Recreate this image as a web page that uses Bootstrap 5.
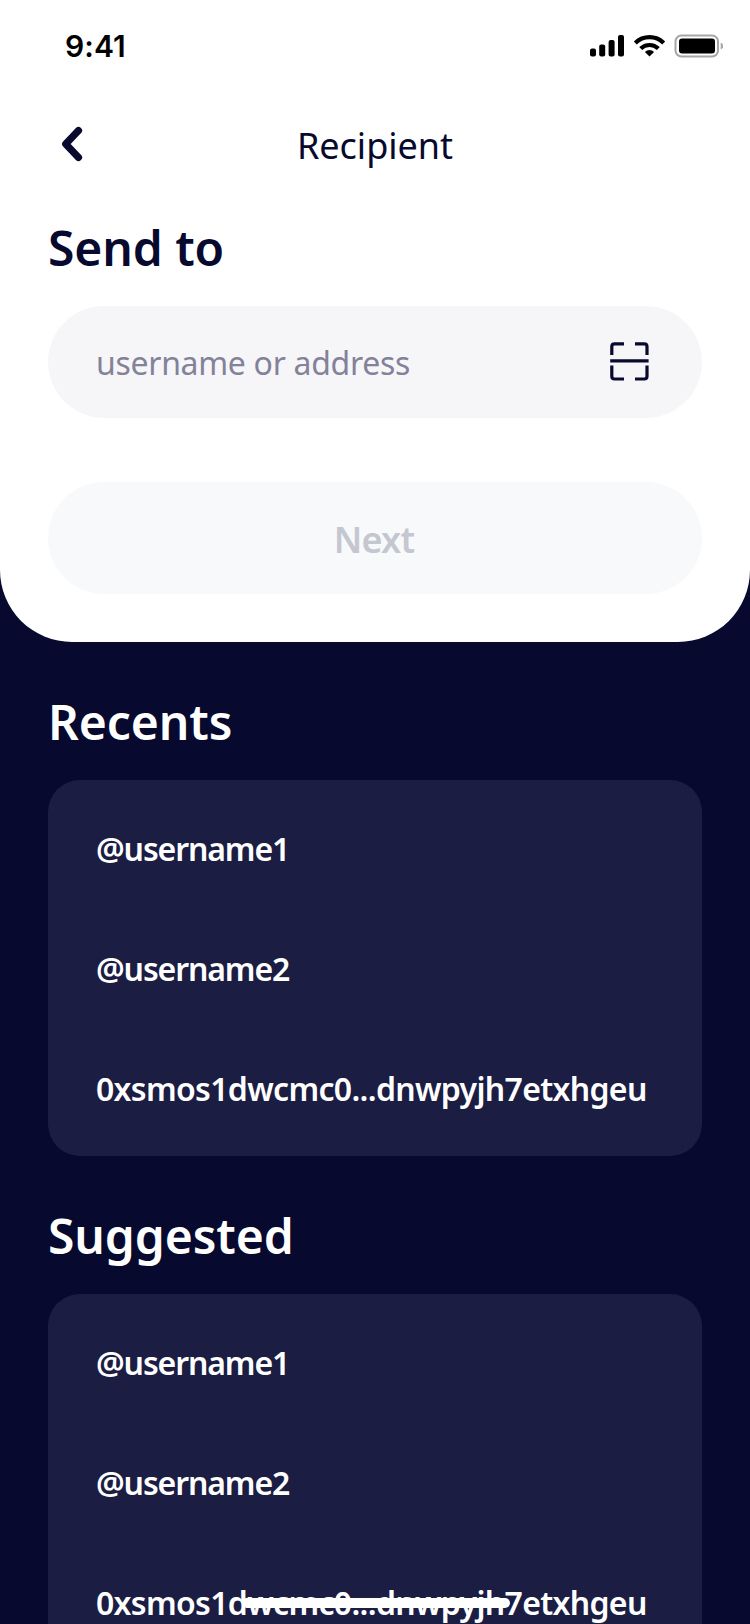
<!DOCTYPE html>
<html lang="en">
<head>
<meta charset="utf-8">
<meta name="viewport" content="width=device-width, initial-scale=1">
<title>Recipient</title>
<link rel="stylesheet" href="https://cdn.jsdelivr.net/npm/bootstrap@5.3.0/dist/css/bootstrap.min.css">
<style>
  body { background: #07092e; font-family: "Noto Sans", sans-serif; height: 1624px; overflow: hidden; }
  .sheet { height: 642px; border-radius: 0 0 72px 72px; color: #07092e; }
  .status-bar { height: 88px; color: #000; padding: 4px 27px 0 65px; }
  .clock { font: 600 30px/36px Inter, sans-serif; letter-spacing: .1px; }
  .top-bar { height: 112px; }
  .top-title { font-size: 36px; font-weight: 400; line-height: 48px; padding-top: 3px; }
  .back-btn { left: 48px; top: 32px; width: 48px; height: 48px; }
  .gutter { padding-left: 48px; padding-right: 48px; }
  .send-form { padding-top: 20px; }
  .section-title { font-size: 48px; line-height: 56px; font-weight: 600; margin: 0 0 30px; letter-spacing: -.1px; }
  .to-field { height: 112px; background: #f6f6f9; padding: 0 50px 0 48px; margin-bottom: 64px; }
  .to-input, .to-input:focus { font-size: 32px; color: #07092e; letter-spacing: -.31px; background: transparent; box-shadow: none; line-height: 44px; position: relative; }
  .to-input { margin-top: 2px; }
  .to-input::placeholder { color: #838299; opacity: 1; }
  .next-btn, .next-btn:disabled { height: 112px; background: #f8f9fb; color: #c5c7d0; font-size: 36px; font-weight: 600; letter-spacing: -.8px; opacity: 1; border: 0; padding: 3px 2px 0 0; }
  .people { background: #1c1d43; border-radius: 32px; padding: 8px 0; --bs-list-group-bg: transparent; --bs-list-group-color: #fff; }
  .person { height: 120px; padding: 1px 48px 0; font-size: 32px; font-weight: 600; letter-spacing: -1.12px; white-space: nowrap; }
  .person-addr { letter-spacing: -.68px; }
  .list-area { padding-top: 52px; }
  .list-area + .list-area { padding-top: 52px; }
  .home-bar { left: 242px; bottom: 16px; width: 268px; height: 10px; }
</style>
</head>
<body>
<main class="sheet bg-white">
  <div class="status-bar d-flex align-items-center justify-content-between">
    <span class="clock">9:41</span>
    <svg width="134" height="24" viewBox="589 34 134 24" aria-hidden="true">
      <rect x="590" y="48.5" width="6" height="8" rx="2"/>
      <rect x="599.2" y="44.5" width="6" height="12" rx="2"/>
      <rect x="608.6" y="40" width="6" height="16.500" rx="2"/>
      <rect x="618" y="35" width="6" height="21.500" rx="2"/>
      <g fill="none" stroke="#000" stroke-width="4.200">
        <path d="M635.300 43A20.300 20.300 0 0 1 663.700 43"/>
        <path d="M640.700 48.600A12.500 12.500 0 0 1 658.300 48.600"/>
      </g>
      <path d="M649.500 56.500L644.900 51.900A6.700 6.700 0 0 1 654.100 51.900Z"/>
      <rect x="675.500" y="35.500" width="42.500" height="21" rx="6" fill="none" stroke="#a6a6a6" stroke-width="2"/>
      <rect x="679" y="38.500" width="36" height="15" rx="3"/>
      <path d="M720.700 42.500Q723.200 43.700 723.200 46T720.700 49.500Z" fill="#a6a6a6"/>
    </svg>
  </div>
  <header class="top-bar position-relative d-flex align-items-center justify-content-center">
    <button class="back-btn btn p-0 border-0 position-absolute" aria-label="Back">
      <svg class="d-block" width="48" height="48" viewBox="0 0 48 48" fill="none" stroke="#07092e" stroke-width="7.200" stroke-linecap="round" stroke-linejoin="round"><path d="M30.500 10.600L17.700 24L30.500 37.400"/></svg>
    </button>
    <h1 class="top-title m-0">Recipient</h1>
  </header>
  <form class="gutter send-form">
    <h2 class="section-title">Send to</h2>
    <div class="to-field rounded-pill d-flex align-items-center">
      <input class="to-input form-control border-0 p-0" type="text" placeholder="username or address">
      <svg class="flex-shrink-0" width="44" height="44" viewBox="0 0 44 44" fill="none" stroke="#07092e" stroke-width="3.200" aria-hidden="true">
        <path d="M3.800 15V6.600Q3.800 3.800 6.600 3.800H16M27 3.800H36.200Q39 3.800 39 6.600V15M39 25.500V36.200Q39 39 36.200 39H27M16 39H6.600Q3.800 39 3.800 36.200V25.500M2.200 20.800H40.600"/>
      </svg>
    </div>
    <button class="next-btn btn w-100 rounded-pill" type="button" disabled>Next</button>
  </form>
</main>
<section class="gutter list-area text-white">
  <h2 class="section-title">Recents</h2>
  <ul class="people list-group list-group-flush">
    <li class="person list-group-item border-0 d-flex align-items-center">@username1</li>
    <li class="person list-group-item border-0 d-flex align-items-center">@username2</li>
    <li class="person person-addr list-group-item border-0 d-flex align-items-center">0xsmos1dwcmc0...dnwpyjh7etxhgeu</li>
  </ul>
</section>
<section class="gutter list-area text-white">
  <h2 class="section-title">Suggested</h2>
  <ul class="people list-group list-group-flush">
    <li class="person list-group-item border-0 d-flex align-items-center">@username1</li>
    <li class="person list-group-item border-0 d-flex align-items-center">@username2</li>
    <li class="person person-addr list-group-item border-0 d-flex align-items-center">0xsmos1dwcmc0...dnwpyjh7etxhgeu</li>
  </ul>
</section>
<div class="home-bar position-fixed bg-white rounded-pill"></div>
<script src="https://cdn.jsdelivr.net/npm/bootstrap@5.3.0/dist/js/bootstrap.bundle.min.js"></script>
</body>
</html>
